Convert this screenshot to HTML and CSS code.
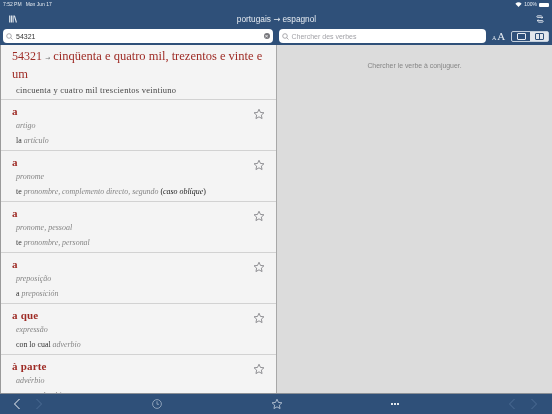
FILE: index.html
```html
<!DOCTYPE html>
<html lang="en">
<head>
    <meta charset="UTF-8">
    <title>Dictionary</title>
    <link rel="stylesheet" href="styles.css">
</head>
<body>
    <div class="app">
        <header class="top">
            <div class="status">
                <span class="status-left"><span>7:52 PM</span><span>Mon Jun 17</span></span>
                <span class="status-right">
                    <svg class="wifi" width="7" height="5" viewBox="0 0 16 12"><path d="M8 12 L0.5 4 A11 11 0 0 1 15.5 4 Z" fill="#fff"/></svg>
                    100%
                    <span class="battery"></span>
                </span>
            </div>
            <div class="title-bar">
                <svg class="icon-lib" width="8" height="8" viewBox="0 0 8 8"><path d="M0.7 0.5V7.5M2.4 0.5V7.5M4.1 0.5V7.5M5.4 0.6L7.4 7.5" stroke="#e6ebf1" stroke-width="1.1" fill="none"/></svg>
                <div class="title">portugais <span class="arrow">→</span> espagnol</div>
                <svg class="icon-swap" width="8" height="8" viewBox="0 0 10 10"><path d="M8.5 3H2Q1 3 1 2T2 1H7M1.5 7H8Q9 7 9 8T8 9H3M7 1.8L8.6 3L7 4.2M3 5.8L1.4 7L3 8.2" stroke="#e6ebf1" stroke-width="1.1" fill="none"/></svg>
            </div>
            <div class="search-bar">
                <div class="search search-left">
                    <svg class="lens" width="7" height="7" viewBox="0 0 14 14"><circle cx="6" cy="6" r="4.6" stroke="#8e8e93" stroke-width="1.5" fill="none"/><path d="M9.5 9.5L13 13" stroke="#8e8e93" stroke-width="1.5"/></svg>
                    <span class="search-value">54321</span>
                    <span class="clear">×</span>
                </div>
                <div class="search search-right">
                    <svg class="lens" width="7" height="7" viewBox="0 0 14 14"><circle cx="6" cy="6" r="4.6" stroke="#8e8e93" stroke-width="1.5" fill="none"/><path d="M9.5 9.5L13 13" stroke="#8e8e93" stroke-width="1.5"/></svg>
                    <span class="search-hint">Chercher des verbes</span>
                </div>
                <div class="text-size"><span class="small-a">A</span><span class="big-a">A</span></div>
                <div class="view-toggle">
                    <div class="toggle-btn"><span class="pane-icon"></span></div>
                    <div class="toggle-btn active"><span class="pane-icon split"></span></div>
                </div>
            </div>
        </header>

        <main class="panes">
            <section class="results">
                <div class="lead">
                    <div class="lead-title"><span class="lead-num">54321</span> <span class="lead-arrow">→</span> cinqüenta e quatro mil, trezentos e vinte e um</div>
                    <div class="lead-trans">cincuenta y cuatro mil trescientos veintiuno</div>
                </div>
                <div class="entry">
                    <div class="entry-word">a</div>
                    <div class="entry-pos">artigo</div>
                    <div class="entry-trans">la <i>artículo</i></div>
                    <svg class="star" width="12" height="12" viewBox="0 0 24 24"><path d="M12 2.5l2.9 6.3 6.9.8-5.1 4.7 1.4 6.8-6.1-3.4-6.1 3.4 1.4-6.8-5.1-4.7 6.9-.8z" fill="none" stroke="#77777c" stroke-width="1.6"/></svg>
                </div>
                <div class="entry">
                    <div class="entry-word">a</div>
                    <div class="entry-pos">pronome</div>
                    <div class="entry-trans">te <i>pronombre, complemento directo, segundo</i> <span class="note">(<i>caso oblíque</i>)</span></div>
                    <svg class="star" width="12" height="12" viewBox="0 0 24 24"><path d="M12 2.5l2.9 6.3 6.9.8-5.1 4.7 1.4 6.8-6.1-3.4-6.1 3.4 1.4-6.8-5.1-4.7 6.9-.8z" fill="none" stroke="#77777c" stroke-width="1.6"/></svg>
                </div>
                <div class="entry">
                    <div class="entry-word">a</div>
                    <div class="entry-pos">pronome, pessoal</div>
                    <div class="entry-trans">te <i>pronombre, personal</i></div>
                    <svg class="star" width="12" height="12" viewBox="0 0 24 24"><path d="M12 2.5l2.9 6.3 6.9.8-5.1 4.7 1.4 6.8-6.1-3.4-6.1 3.4 1.4-6.8-5.1-4.7 6.9-.8z" fill="none" stroke="#77777c" stroke-width="1.6"/></svg>
                </div>
                <div class="entry">
                    <div class="entry-word">a</div>
                    <div class="entry-pos">preposição</div>
                    <div class="entry-trans">a <i>preposición</i></div>
                    <svg class="star" width="12" height="12" viewBox="0 0 24 24"><path d="M12 2.5l2.9 6.3 6.9.8-5.1 4.7 1.4 6.8-6.1-3.4-6.1 3.4 1.4-6.8-5.1-4.7 6.9-.8z" fill="none" stroke="#77777c" stroke-width="1.6"/></svg>
                </div>
                <div class="entry">
                    <div class="entry-word">a que</div>
                    <div class="entry-pos">expressão</div>
                    <div class="entry-trans">con lo cual <i>adverbio</i></div>
                    <svg class="star" width="12" height="12" viewBox="0 0 24 24"><path d="M12 2.5l2.9 6.3 6.9.8-5.1 4.7 1.4 6.8-6.1-3.4-6.1 3.4 1.4-6.8-5.1-4.7 6.9-.8z" fill="none" stroke="#77777c" stroke-width="1.6"/></svg>
                </div>
                <div class="entry">
                    <div class="entry-word">à parte</div>
                    <div class="entry-pos">advérbio</div>
                    <div class="entry-trans">aparte <i>adverbio</i></div>
                    <svg class="star" width="12" height="12" viewBox="0 0 24 24"><path d="M12 2.5l2.9 6.3 6.9.8-5.1 4.7 1.4 6.8-6.1-3.4-6.1 3.4 1.4-6.8-5.1-4.7 6.9-.8z" fill="none" stroke="#77777c" stroke-width="1.6"/></svg>
                </div>
            </section>
            <section class="conjugate">
                <p class="conjugate-hint">Chercher le verbe à conjuguer.</p>
            </section>
        </main>

        <footer class="bottom">
            <div class="bottom-group">
                <svg width="8" height="12" viewBox="0 0 8 12"><path d="M6.5 1L1.5 6L6.5 11" stroke="#f2f5f8" stroke-width="1" fill="none"/></svg>
                <svg width="8" height="12" viewBox="0 0 8 12"><path d="M1.5 1L6.5 6L1.5 11" stroke="#4d6d95" stroke-width="1" fill="none"/></svg>
            </div>
            <svg class="clock" width="10" height="10" viewBox="0 0 20 20"><circle cx="10" cy="10" r="8.8" stroke="#a9b9cc" stroke-width="1.5" fill="none"/><path d="M10 4.5V10.5H14" stroke="#a9b9cc" stroke-width="1.5" fill="none"/></svg>
            <svg class="fav" width="12" height="12" viewBox="0 0 24 24"><path d="M12 2.5l2.9 6.3 6.9.8-5.1 4.7 1.4 6.8-6.1-3.4-6.1 3.4 1.4-6.8-5.1-4.7 6.9-.8z" fill="none" stroke="#c7d2df" stroke-width="1.6"/></svg>
            <div class="dots"><span></span><span></span><span></span></div>
            <div class="bottom-group">
                <svg width="8" height="12" viewBox="0 0 8 12"><path d="M6.5 1L1.5 6L6.5 11" stroke="#4d6d95" stroke-width="1" fill="none"/></svg>
                <svg width="8" height="12" viewBox="0 0 8 12"><path d="M1.5 1L6.5 6L1.5 11" stroke="#4d6d95" stroke-width="1" fill="none"/></svg>
            </div>
        </footer>
    </div>
</body>
</html>
```

FILE: styles.css
```css
body {
    margin: 0;
    font-family: "Liberation Sans", Arial, sans-serif;
}
.app {
    width: 552px;
    height: 414px;
    display: flex;
    flex-direction: column;
    overflow: hidden;
    background-color: #2f5079;
    will-change: transform;
}

/* top bar */
.top {
    height: 45px;
    flex: none;
    color: #fff;
    box-sizing: border-box;
}
.status {
    height: 9px;
    padding: 0 3px;
    display: flex;
    justify-content: space-between;
    align-items: center;
    font-size: 5px;
    line-height: 9px;
    color: #e6ebf1;
}
.status-left {
    display: flex;
    gap: 4px;
}
.status-right {
    display: flex;
    align-items: center;
    gap: 2px;
}
.battery {
    width: 10px;
    height: 4px;
    background-color: #fff;
    border-radius: 1px;
}
.title-bar {
    height: 20px;
    padding: 0 8px 0 9px;
    display: flex;
    justify-content: space-between;
    align-items: center;
}
.title {
    font-size: 8.3px;
    color: #e6ebf1;
}
.arrow {
    font-family: "DejaVu Sans", sans-serif;
}
.search-bar {
    height: 14px;
    padding: 0 3px;
    display: flex;
    align-items: center;
}
.search {
    height: 14px;
    box-sizing: border-box;
    padding: 0 3px;
    background-color: #fff;
    border-radius: 4px;
    display: flex;
    align-items: center;
    font-size: 7px;
}
.search-left {
    width: 270px;
    color: #222;
}
.search-right {
    width: 208px;
    margin-left: 6px;
    color: #a2a2a7;
}
.lens {
    margin-right: 3px;
    flex: none;
}
.search-value {
    flex: 1;
    color: #333;
}
.clear {
    width: 6px;
    height: 6px;
    border-radius: 50%;
    background-color: #77777c;
    color: #fff;
    font-size: 6px;
    line-height: 6px;
    text-align: center;
}
.text-size {
    width: 25px;
    display: flex;
    justify-content: center;
    align-items: baseline;
    font-family: "Liberation Serif", serif;
    color: #e6ebf1;
}
.small-a {
    font-size: 6px;
}
.big-a {
    font-size: 11px;
    margin-left: 1px;
}
.view-toggle {
    width: 38px;
    height: 11px;
    box-sizing: border-box;
    border: 1px solid #c3cfdc;
    border-radius: 2px;
    display: flex;
}
.toggle-btn {
    flex: 1;
    display: flex;
    align-items: center;
    justify-content: center;
    color: #e6ebf1;
}
.toggle-btn.active {
    background-color: #e2e7ed;
    color: #2f5079;
}
.pane-icon {
    width: 7px;
    height: 5px;
    border: 1px solid currentColor;
    border-radius: 1px;
}
.pane-icon.split {
    background: linear-gradient(currentColor, currentColor) center / 1px 100% no-repeat;
}

/* panes */
.panes {
    flex: 1;
    min-height: 0;
    display: flex;
    overflow: hidden;
}
.results {
    width: 277px;
    flex: none;
    box-sizing: border-box;
    border-left: 1px solid #9a9a9a;
    border-right: 1px solid #a8a8a8;
    background-color: #f4f4f4;
    font-family: "Liberation Serif", serif;
    overflow: hidden;
}
.lead {
    height: 55px;
    box-sizing: border-box;
    padding: 3px 5px 0 11px;
    border-bottom: 1px solid #d2d2d2;
}
.lead-title {
    font-size: 12.5px;
    line-height: 16px;
    color: #9e2b25;
}
.lead-num {
    font-size: 12px;
}
.lead-arrow {
    font-family: "DejaVu Sans", sans-serif;
    font-size: 6px;
    color: #777;
}
.lead-trans {
    margin: 2px 0 0 4px;
    font-size: 8.5px;
    line-height: 12px;
    color: #444;
    letter-spacing: 0.27px;
}
.entry {
    height: 51px;
    box-sizing: border-box;
    padding: 4px 0 0 11px;
    border-bottom: 1px solid #d2d2d2;
    position: relative;
}
.entry-word {
    font-size: 11px;
    line-height: 14px;
    font-weight: bold;
    color: #9e2b25;
    letter-spacing: 0.2px;
}
.entry-pos {
    margin: 2px 0 0 4px;
    font-size: 8px;
    line-height: 12px;
    font-style: italic;
    color: #858585;
}
.entry-trans {
    margin: 3px 0 0 4px;
    font-size: 7.9px;
    line-height: 12px;
    color: #333;
}
.entry-trans i {
    color: #858585;
}
.entry-trans .note,
.entry-trans .note i {
    color: #222;
}
.star {
    position: absolute;
    top: 8px;
    right: 11px;
}
.conjugate {
    flex: 1;
    background-color: #dcdcdc;
    text-align: center;
}
.conjugate-hint {
    margin: 16px 0 0;
    font-size: 6.9px;
    line-height: 10px;
    color: #858585;
}

/* bottom toolbar */
.bottom {
    height: 21px;
    flex: none;
    display: flex;
    align-items: center;
    justify-content: space-between;
    padding: 0 14px 0 13px;
    border-top: 1px solid #8a8f96;
    box-sizing: border-box;
}
.bottom-group {
    display: flex;
    gap: 14px;
}
.dots {
    display: flex;
    gap: 1px;
}
.dots span {
    width: 2px;
    height: 2px;
    background-color: #dfe5ec;
}
```
